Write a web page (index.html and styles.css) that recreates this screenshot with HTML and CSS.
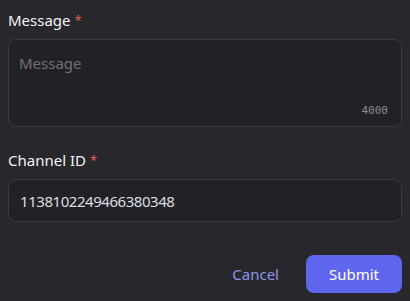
FILE: index.html
```html
<!DOCTYPE html>
<html>
<head>
<meta charset="utf-8">
<link rel="stylesheet" href="styles.css">
</head>
<body>
<form class="form">
  <div class="field">
    <label class="label">Message <span class="req">*</span></label>
    <div class="textarea-box">
      <div class="placeholder">Message</div>
      <span class="counter">4000</span>
    </div>
  </div>
  <div class="field field-second">
    <label class="label">Channel ID <span class="req">*</span></label>
    <div class="input-box">1138102249466380348</div>
  </div>
  <div class="actions">
    <button type="button" class="btn-cancel">Cancel</button>
    <button type="button" class="btn-submit">Submit</button>
  </div>
</form>
</body>
</html>
```

FILE: styles.css
```css
* { box-sizing: border-box; }
html, body {
  margin: 0;
  background: #27272c;
}
body {
  width: 410px;
  height: 301px;
  overflow: hidden;
  font-family: "Noto Sans", "DejaVu Sans", sans-serif;
}
.form {
  display: flex;
  flex-direction: column;
  padding: 10px 8px 0 8px;
}
.field {
  display: flex;
  flex-direction: column;
  gap: 9px;
}
.field-second {
  margin-top: 23px;
}
.label {
  font-size: 15px;
  line-height: 20px;
  height: 20px;
  font-weight: 400;
  color: #f2f3f5;
}
.req {
  color: #e06060;
  font-size: 13px;
  vertical-align: 1px;
}
.textarea-box {
  position: relative;
  height: 88px;
  border: 1px solid #3b3b41;
  border-radius: 8px;
  background: #222226;
  padding: 13px 10px;
}
.placeholder {
  font-size: 15px;
  line-height: 20px;
  color: #6f7078;
}
.counter {
  position: absolute;
  right: 13px;
  bottom: 8px;
  font-family: "DejaVu Sans Mono", "Liberation Mono", monospace;
  font-size: 11px;
  line-height: 14px;
  color: #8a8b93;
}
.input-box {
  height: 43px;
  border: 1px solid #3b3b41;
  border-radius: 8px;
  background: #222226;
  padding: 0 10px 0 11px;
  display: flex;
  align-items: center;
  font-size: 15px;
  letter-spacing: -0.45px;
  color: #dcdde2;
}
.actions {
  display: flex;
  justify-content: flex-end;
  align-items: center;
  gap: 11px;
  margin-top: 33px;
}
.btn-cancel {
  font-family: inherit;
  background: none;
  border: none;
  color: #8e95ea;
  font-size: 15px;
  padding: 0 16px;
  height: 38px;
}
.btn-submit {
  font-family: inherit;
  width: 96px;
  height: 38px;
  border: none;
  border-radius: 8px;
  background: #5f66ee;
  color: #ffffff;
  font-size: 15px;
  font-weight: 400;
}
```
